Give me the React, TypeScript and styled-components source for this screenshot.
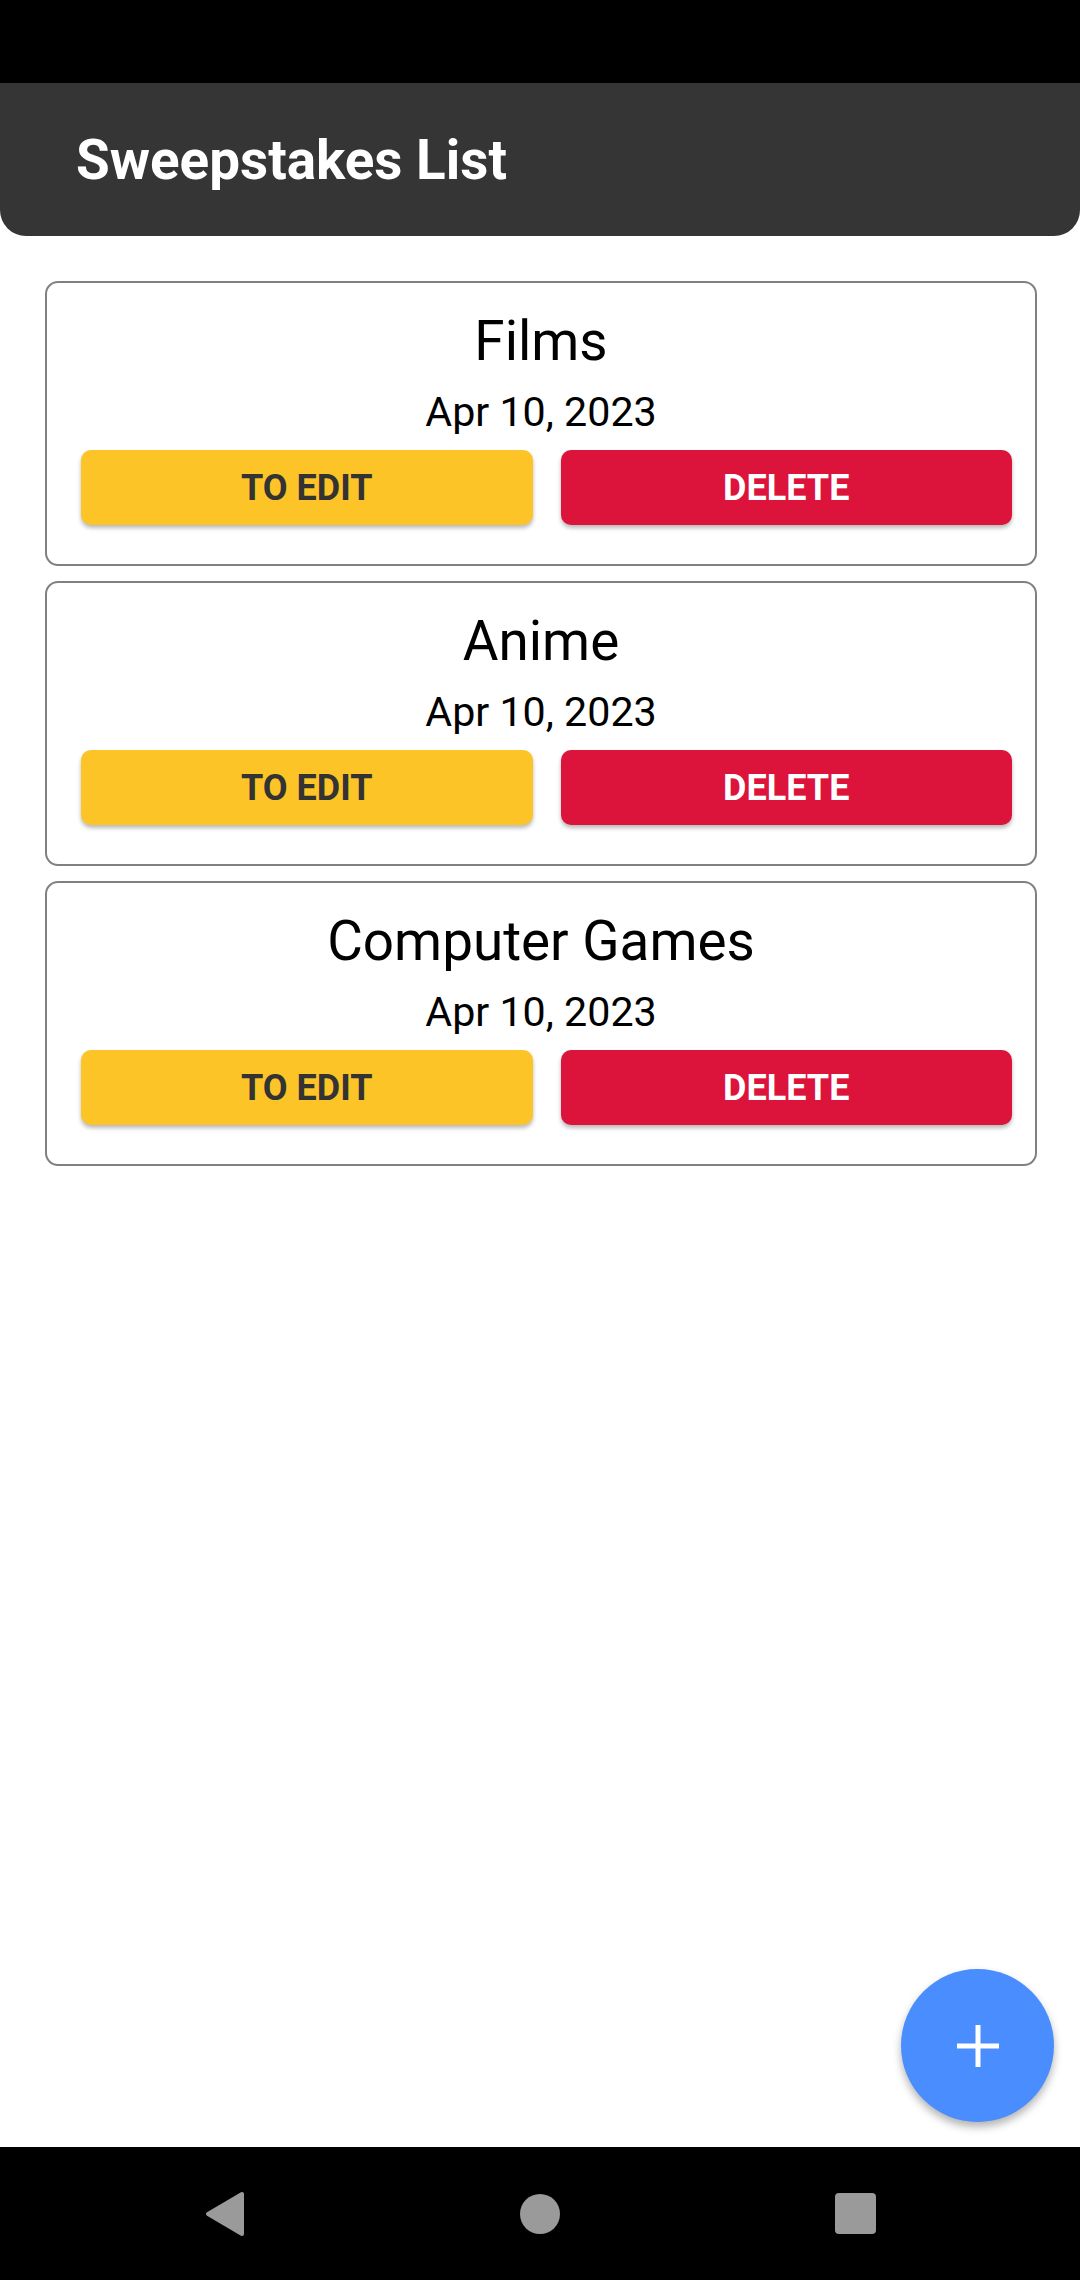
import React from 'react';
import styled, { createGlobalStyle } from 'styled-components';

type Sweepstake = {
  id: number;
  title: string;
  date: string;
};

const sweepstakes: Sweepstake[] = [
  { id: 1, title: 'Films', date: 'Apr 10, 2023' },
  { id: 2, title: 'Anime', date: 'Apr 10, 2023' },
  { id: 3, title: 'Computer Games', date: 'Apr 10, 2023' },
];

const GlobalStyle = createGlobalStyle`
  html, body {
    margin: 0;
    padding: 0;
    background: #ffffff;
  }
  body {
    font-family: Roboto, 'Noto Sans', 'Liberation Sans', sans-serif;
  }
`;

const Screen = styled.div`
  width: 1080px;
  height: 2280px;
  display: flex;
  flex-direction: column;
  background: #ffffff;
  overflow: hidden;
`;

const StatusBar = styled.div`
  height: 83px;
  flex-shrink: 0;
  background: #000000;
`;

const Header = styled.header`
  height: 153px;
  flex-shrink: 0;
  display: flex;
  align-items: center;
  padding-left: 76px;
  background: #353535;
  border-bottom-left-radius: 26px;
  border-bottom-right-radius: 26px;
`;

const HeaderTitle = styled.h1`
  margin: 0;
  color: #ffffff;
  font-size: 54.8px;
  font-weight: 700;
  line-height: 62px;
`;

const Content = styled.main`
  position: relative;
  flex: 1;
  display: flex;
  flex-direction: column;
  gap: 15px;
  padding: 45px 43px 0 45px;
`;

const Card = styled.section`
  display: flex;
  flex-direction: column;
  align-items: center;
  padding: 27px 0 39px;
  border: 2px solid #808080;
  border-radius: 13px;
`;

const CardTitle = styled.div`
  color: #000000;
  font-size: 54.8px;
  font-weight: 400;
  line-height: 62px;
`;

const CardDate = styled.div`
  margin-top: 17px;
  color: #000000;
  font-size: 41.2px;
  line-height: 46px;
`;

const ButtonRow = styled.div`
  align-self: stretch;
  display: flex;
  gap: 28px;
  margin-top: 15px;
  padding: 0 23px 0 34px;
`;

const ActionButton = styled.button<{ $variant: 'edit' | 'delete' }>`
  flex: 1;
  height: 75px;
  border: none;
  border-radius: 10px;
  background: ${(p) => (p.$variant === 'edit' ? '#FDC427' : '#DC143C')};
  color: ${(p) => (p.$variant === 'edit' ? '#333333' : '#ffffff')};
  font-family: Roboto, 'Noto Sans', sans-serif;
  font-size: 36px;
  font-weight: 700;
  box-shadow: 0 3px 4px rgba(0, 0, 0, 0.28);
  cursor: pointer;
`;

const Fab = styled.button`
  position: absolute;
  right: 26px;
  bottom: 25px;
  width: 153px;
  height: 153px;
  display: flex;
  align-items: center;
  justify-content: center;
  border: none;
  border-radius: 50%;
  background: #4A8DFE;
  box-shadow: 0 5px 9px rgba(0, 0, 0, 0.3);
  cursor: pointer;
`;

const NavBar = styled.nav`
  height: 133px;
  flex-shrink: 0;
  display: flex;
  align-items: center;
  justify-content: center;
  gap: 195px;
  background: #000000;
`;

const NavSlot = styled.div`
  width: 120px;
  display: flex;
  justify-content: center;
  align-items: center;
`;

const HomeDot = styled.div`
  width: 40px;
  height: 40px;
  border-radius: 50%;
  background: #9a9a9a;
`;

const RecentsSquare = styled.div`
  width: 41px;
  height: 41px;
  border-radius: 4px;
  background: #9a9a9a;
`;

const PlusIcon = () => (
  <svg width="42" height="42" viewBox="0 0 42 42">
    <path d="M21 0v42M0 21h42" stroke="#ffffff" strokeWidth="5" />
  </svg>
);

const BackIcon = () => (
  <svg width="40" height="46" viewBox="0 0 40 46">
    <polygon
      points="3,23 37,3 37,43"
      fill="#9a9a9a"
      stroke="#9a9a9a"
      strokeWidth="4"
      strokeLinejoin="round"
    />
  </svg>
);

const SweepstakeCard: React.FC<{ item: Sweepstake }> = ({ item }) => (
  <Card>
    <CardTitle>{item.title}</CardTitle>
    <CardDate>{item.date}</CardDate>
    <ButtonRow>
      <ActionButton $variant="edit">TO EDIT</ActionButton>
      <ActionButton $variant="delete">DELETE</ActionButton>
    </ButtonRow>
  </Card>
);

const App: React.FC = () => (
  <>
    <GlobalStyle />
    <Screen>
      <StatusBar />
      <Header>
        <HeaderTitle>Sweepstakes List</HeaderTitle>
      </Header>
      <Content>
        {sweepstakes.map((item) => (
          <SweepstakeCard key={item.id} item={item} />
        ))}
        <Fab aria-label="Add sweepstake">
          <PlusIcon />
        </Fab>
      </Content>
      <NavBar>
        <NavSlot>
          <BackIcon />
        </NavSlot>
        <NavSlot>
          <HomeDot />
        </NavSlot>
        <NavSlot>
          <RecentsSquare />
        </NavSlot>
      </NavBar>
    </Screen>
  </>
);

export default App;
